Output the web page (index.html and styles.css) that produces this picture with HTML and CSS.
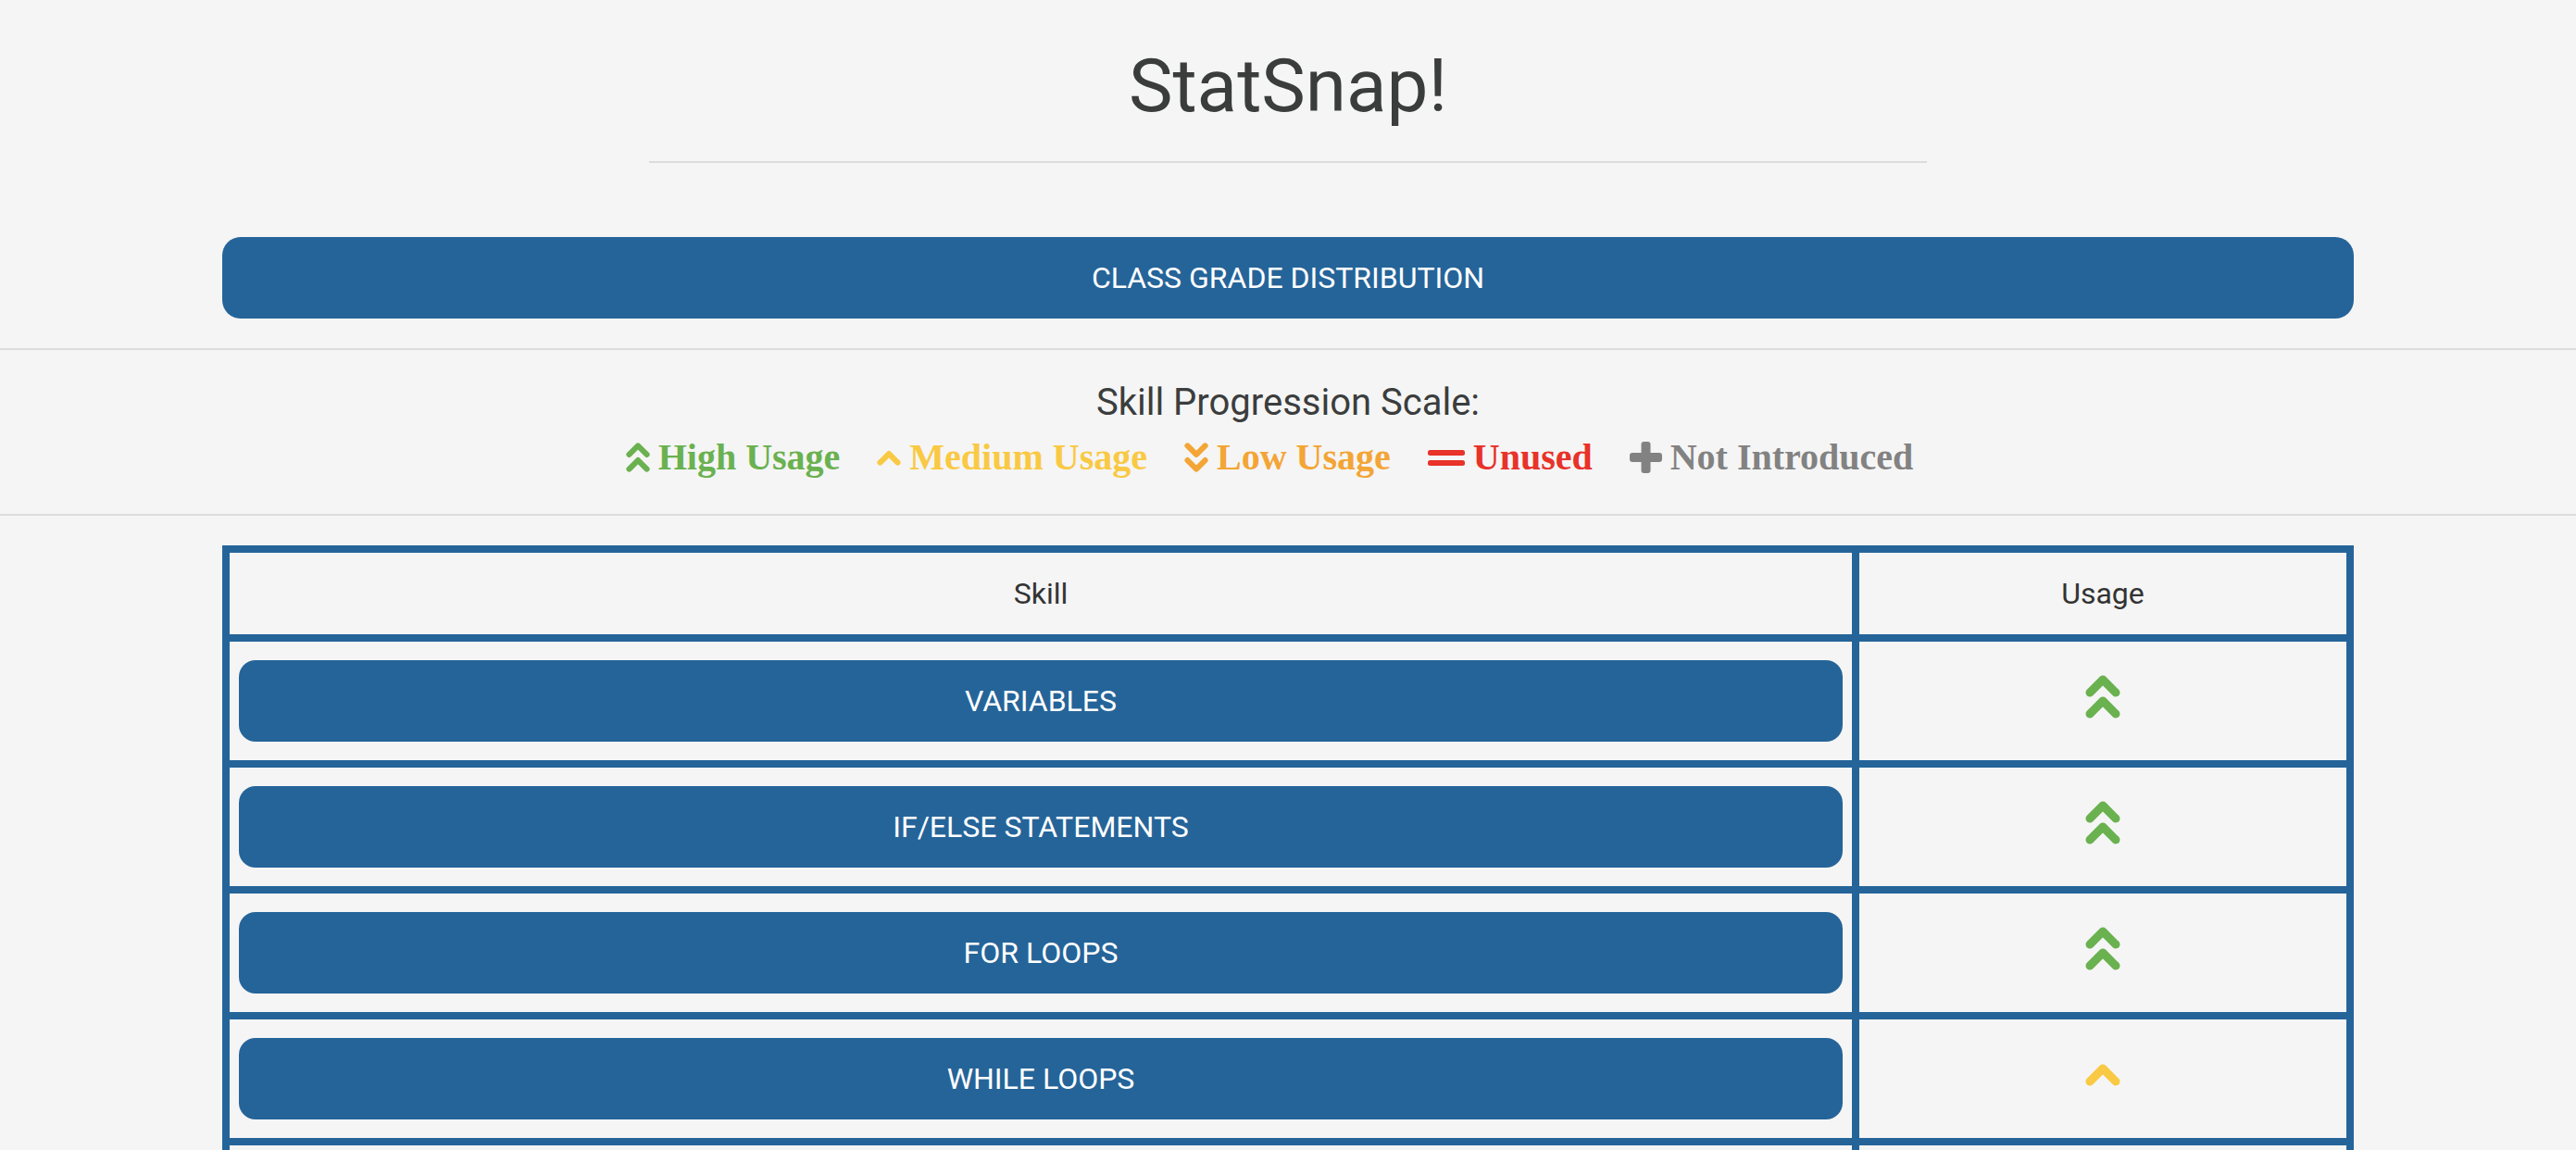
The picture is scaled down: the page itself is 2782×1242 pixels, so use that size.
FILE: index.html
```html
<!DOCTYPE html>
<html lang="en">
<head>
<meta charset="utf-8">
<title>StatSnap!</title>
<link rel="stylesheet" href="styles.css">
</head>
<body>
<header class="page-header">
  <h1 class="title">StatSnap!</h1>
  <hr class="title-rule">
</header>

<div class="container">
  <button class="btn-wide" type="button">CLASS GRADE DISTRIBUTION</button>
</div>

<hr class="full-rule">

<section class="scale">
  <p class="scale-label">Skill Progression Scale:</p>
  <div class="legend">
    <span class="legend-item high">
      <svg class="ico-dbl" viewBox="0 0 38 47" aria-hidden="true"><polyline points="5,19 19,5 33,19"/><polyline points="5,42 19,28 33,42"/></svg>
      <span>High Usage</span>
    </span>
    <span class="legend-item medium">
      <svg class="ico-single" viewBox="0 0 38 25" aria-hidden="true"><polyline points="5,20 19,6 33,20"/></svg>
      <span>Medium Usage</span>
    </span>
    <span class="legend-item low">
      <svg class="ico-dbl" viewBox="0 0 38 47" aria-hidden="true"><polyline points="5,5 19,19 33,5"/><polyline points="5,28 19,42 33,28"/></svg>
      <span>Low Usage</span>
    </span>
    <span class="legend-item unused">
      <svg class="ico-equals" viewBox="0 0 40 17" aria-hidden="true"><rect x="0" y="0" width="40" height="6" rx="2.5"/><rect x="0" y="11" width="40" height="6" rx="2.5"/></svg>
      <span>Unused</span>
    </span>
    <span class="legend-item none">
      <svg class="ico-plus" viewBox="0 0 35 34" aria-hidden="true"><rect x="0" y="12" width="35" height="10" rx="3"/><rect x="12.5" y="0" width="10" height="34" rx="3"/></svg>
      <span>Not Introduced</span>
    </span>
  </div>
</section>

<hr class="full-rule">

<div class="container">
  <table class="skills">
    <thead>
      <tr><th class="col-skill">Skill</th><th class="col-usage">Usage</th></tr>
    </thead>
    <tbody>
      <tr>
        <td class="cell-skill"><button class="btn-skill" type="button">VARIABLES</button></td>
        <td class="cell-usage"><svg class="usage-dbl high" viewBox="0 0 38 47" aria-hidden="true"><polyline points="5,19 19,5 33,19"/><polyline points="5,42 19,28 33,42"/></svg></td>
      </tr>
      <tr>
        <td class="cell-skill"><button class="btn-skill" type="button">IF/ELSE STATEMENTS</button></td>
        <td class="cell-usage"><svg class="usage-dbl high" viewBox="0 0 38 47" aria-hidden="true"><polyline points="5,19 19,5 33,19"/><polyline points="5,42 19,28 33,42"/></svg></td>
      </tr>
      <tr>
        <td class="cell-skill"><button class="btn-skill" type="button">FOR LOOPS</button></td>
        <td class="cell-usage"><svg class="usage-dbl high" viewBox="0 0 38 47" aria-hidden="true"><polyline points="5,19 19,5 33,19"/><polyline points="5,42 19,28 33,42"/></svg></td>
      </tr>
      <tr>
        <td class="cell-skill"><button class="btn-skill" type="button">WHILE LOOPS</button></td>
        <td class="cell-usage"><svg class="usage-single medium" viewBox="0 0 38 25" aria-hidden="true"><polyline points="5,20 19,6 33,20"/></svg></td>
      </tr>
      <tr>
        <td class="cell-skill"><button class="btn-skill" type="button">FUNCTIONS</button></td>
        <td class="cell-usage"><svg class="usage-single medium" viewBox="0 0 38 25" aria-hidden="true"><polyline points="5,20 19,6 33,20"/></svg></td>
      </tr>
    </tbody>
  </table>
</div>
</body>
</html>
```

FILE: styles.css
```css
html, body {
  margin: 0;
  padding: 0;
}

body {
  background: #f5f5f5;
  color: #3b3d3d;
  font-family: Roboto, "Liberation Sans", Arial, sans-serif;
}

.page-header {
  display: flex;
  flex-direction: column;
  align-items: center;
  padding-top: 46px;
}

.title {
  margin: 0;
  font-size: 80px;
  font-weight: 400;
  line-height: normal;
  color: #3b3d3d;
}

.title-rule {
  width: 1380px;
  margin: 34px 0 0;
  border: 0;
  border-top: 2px solid #dcdcdc;
  height: 0;
}

.container {
  padding: 0 240px;
}

.btn-wide {
  display: block;
  width: 100%;
  height: 88px;
  margin-top: 80px;
  border: 0;
  border-radius: 20px;
  background: #256499;
  color: #ffffff;
  font-family: Roboto, "Liberation Sans", Arial, sans-serif;
  font-size: 32px;
  font-weight: 400;
}

.full-rule {
  margin: 32px 0 0;
  border: 0;
  border-top: 2px solid #dcdcdc;
  height: 0;
}

.scale {
  display: flex;
  flex-direction: column;
  align-items: center;
  padding-top: 36px;
  padding-bottom: 6px;
}

.scale-label {
  margin: 0;
  font-size: 40px;
  line-height: 42px;
  color: #3b3d3d;
}

.legend {
  display: flex;
  justify-content: center;
  align-items: center;
  margin-top: 15px;
  font-family: "Liberation Serif", "Times New Roman", serif;
  font-weight: 700;
  font-size: 40px;
  line-height: 46px;
}

.legend-item {
  display: flex;
  align-items: center;
  gap: 9px;
  margin-right: 40px;
}

.legend-item svg polyline {
  fill: none;
  stroke: currentColor;
  stroke-width: 9;
  stroke-linecap: round;
  stroke-linejoin: round;
}

.legend-item svg rect {
  fill: currentColor;
}

.ico-dbl {
  width: 26px;
  height: 32px;
}

.ico-single {
  width: 26px;
  height: 17px;
}

.ico-equals {
  width: 40px;
  height: 17px;
}

.ico-plus {
  width: 35px;
  height: 34px;
}

.high { color: #6ab150; }
.medium { color: #f9c944; }
.low { color: #f3a536; }
.unused { color: #e8322a; }
.none { color: #828282; }

.skills {
  width: 100%;
  margin-top: 32px;
  border-collapse: separate;
  border-spacing: 0;
  table-layout: fixed;
}

.skills th,
.skills td {
  padding: 0;
  border-right: 8px solid #256499;
  border-bottom: 8px solid #256499;
  text-align: center;
  vertical-align: middle;
}

.skills th {
  border-top: 8px solid #256499;
  height: 88px;
  font-size: 32px;
  font-weight: 400;
  color: #333333;
}

.skills th.col-skill,
.skills td.cell-skill {
  border-left: 8px solid #256499;
}

.col-skill {
  width: 1752px;
}

.cell-skill {
  height: 128px;
}

.btn-skill {
  display: block;
  width: calc(100% - 20px);
  height: 88px;
  margin: 0 10px;
  border: 0;
  border-radius: 18px;
  background: #256499;
  color: #ffffff;
  font-family: Roboto, "Liberation Sans", Arial, sans-serif;
  font-size: 32px;
  font-weight: 400;
}

.cell-usage {
  padding-bottom: 9px !important;
}

.usage-dbl,
.usage-single {
  display: block;
  margin: 0 auto;
}

.usage-dbl {
  width: 38px;
  height: 47px;
}

.usage-single {
  width: 38px;
  height: 25px;
}

.cell-usage svg polyline {
  fill: none;
  stroke: currentColor;
  stroke-width: 9;
  stroke-linecap: round;
  stroke-linejoin: round;
}
```
